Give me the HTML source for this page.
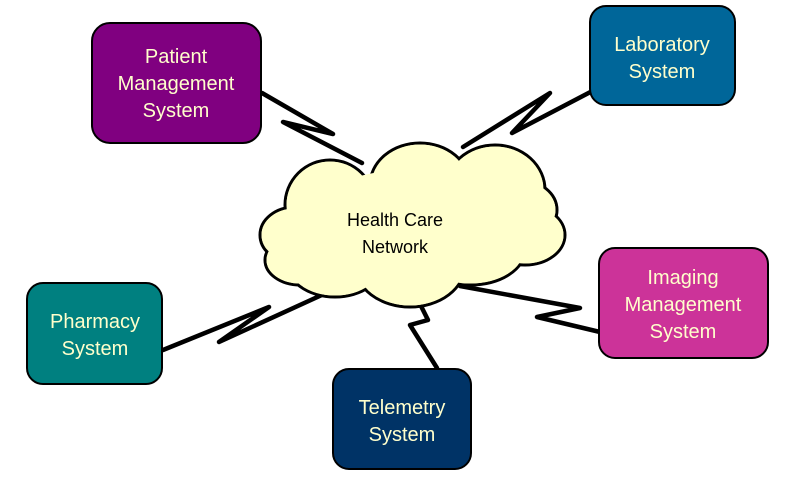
<!DOCTYPE html>
<html><head><style>
body{margin:0;width:791px;height:489px;background:#fff;overflow:hidden}
svg{display:block}
text{font-family:"Liberation Sans",sans-serif;font-size:20px;text-anchor:middle}
.b text{fill:#ffffcc}
</style></head><body>
<svg width="791" height="489" viewBox="0 0 791 489">
<g fill="none" stroke="#000" stroke-width="4.5" stroke-linejoin="round" stroke-linecap="round">
<path d="M262,93 L333,134 L283,122 L362,163"/>
<path d="M600,87 L512,133 L550,93 L463,147"/>
<path d="M163,350 L269,307 L219,342 L324,294"/>
<path d="M460,286 L580,308 L537,317 L600,332"/>
<path d="M421,306 L428,320 L410,325 L437,368"/>
</g>
<g fill="#ffffcc" stroke="#000" stroke-width="3">
<ellipse cx="330" cy="205" rx="45" ry="45"/>
<ellipse cx="420" cy="185" rx="50" ry="42"/>
<ellipse cx="495" cy="190" rx="50" ry="45"/>
<ellipse cx="520" cy="210" rx="37" ry="30"/>
<ellipse cx="525" cy="235" rx="40" ry="30"/>
<ellipse cx="470" cy="250" rx="55" ry="35"/>
<ellipse cx="410" cy="265" rx="55" ry="42"/>
<ellipse cx="335" cy="260" rx="50" ry="37"/>
<ellipse cx="295" cy="235" rx="35" ry="28"/>
<ellipse cx="300" cy="260" rx="35" ry="25"/>
</g>
<g fill="#ffffcc">
<ellipse cx="330" cy="205" rx="43.5" ry="43.5"/>
<ellipse cx="420" cy="185" rx="48.5" ry="40.5"/>
<ellipse cx="495" cy="190" rx="48.5" ry="43.5"/>
<ellipse cx="520" cy="210" rx="35.5" ry="28.5"/>
<ellipse cx="525" cy="235" rx="38.5" ry="28.5"/>
<ellipse cx="470" cy="250" rx="53.5" ry="33.5"/>
<ellipse cx="410" cy="265" rx="53.5" ry="40.5"/>
<ellipse cx="335" cy="260" rx="48.5" ry="35.5"/>
<ellipse cx="295" cy="235" rx="33.5" ry="26.5"/>
<ellipse cx="300" cy="260" rx="33.5" ry="23.5"/>
<ellipse cx="410" cy="225" rx="110" ry="55"/>
</g>
<text x="395" y="226" fill="#000" style="font-size:18px">Health Care</text>
<text x="395" y="253" fill="#000" style="font-size:18px">Network</text>
<g class="b" stroke="#000" stroke-width="2">
<rect x="92" y="23" width="169" height="120" rx="18" fill="#800080"/>
<rect x="590" y="6" width="145" height="99" rx="16" fill="#006699"/>
<rect x="599" y="248" width="169" height="110" rx="16" fill="#cc3399"/>
<rect x="27" y="283" width="135" height="101" rx="16" fill="#008080"/>
<rect x="333" y="369" width="138" height="100" rx="16" fill="#003366"/>
</g>
<g class="b">
<text x="176" y="63">Patient</text>
<text x="176" y="90">Management</text>
<text x="176" y="117">System</text>
<text x="662" y="51">Laboratory</text>
<text x="662" y="78">System</text>
<text x="683" y="284">Imaging</text>
<text x="683" y="311">Management</text>
<text x="683" y="338">System</text>
<text x="95" y="328">Pharmacy</text>
<text x="95" y="355">System</text>
<text x="402" y="414">Telemetry</text>
<text x="402" y="441">System</text>
</g>
</svg>
</body></html>
